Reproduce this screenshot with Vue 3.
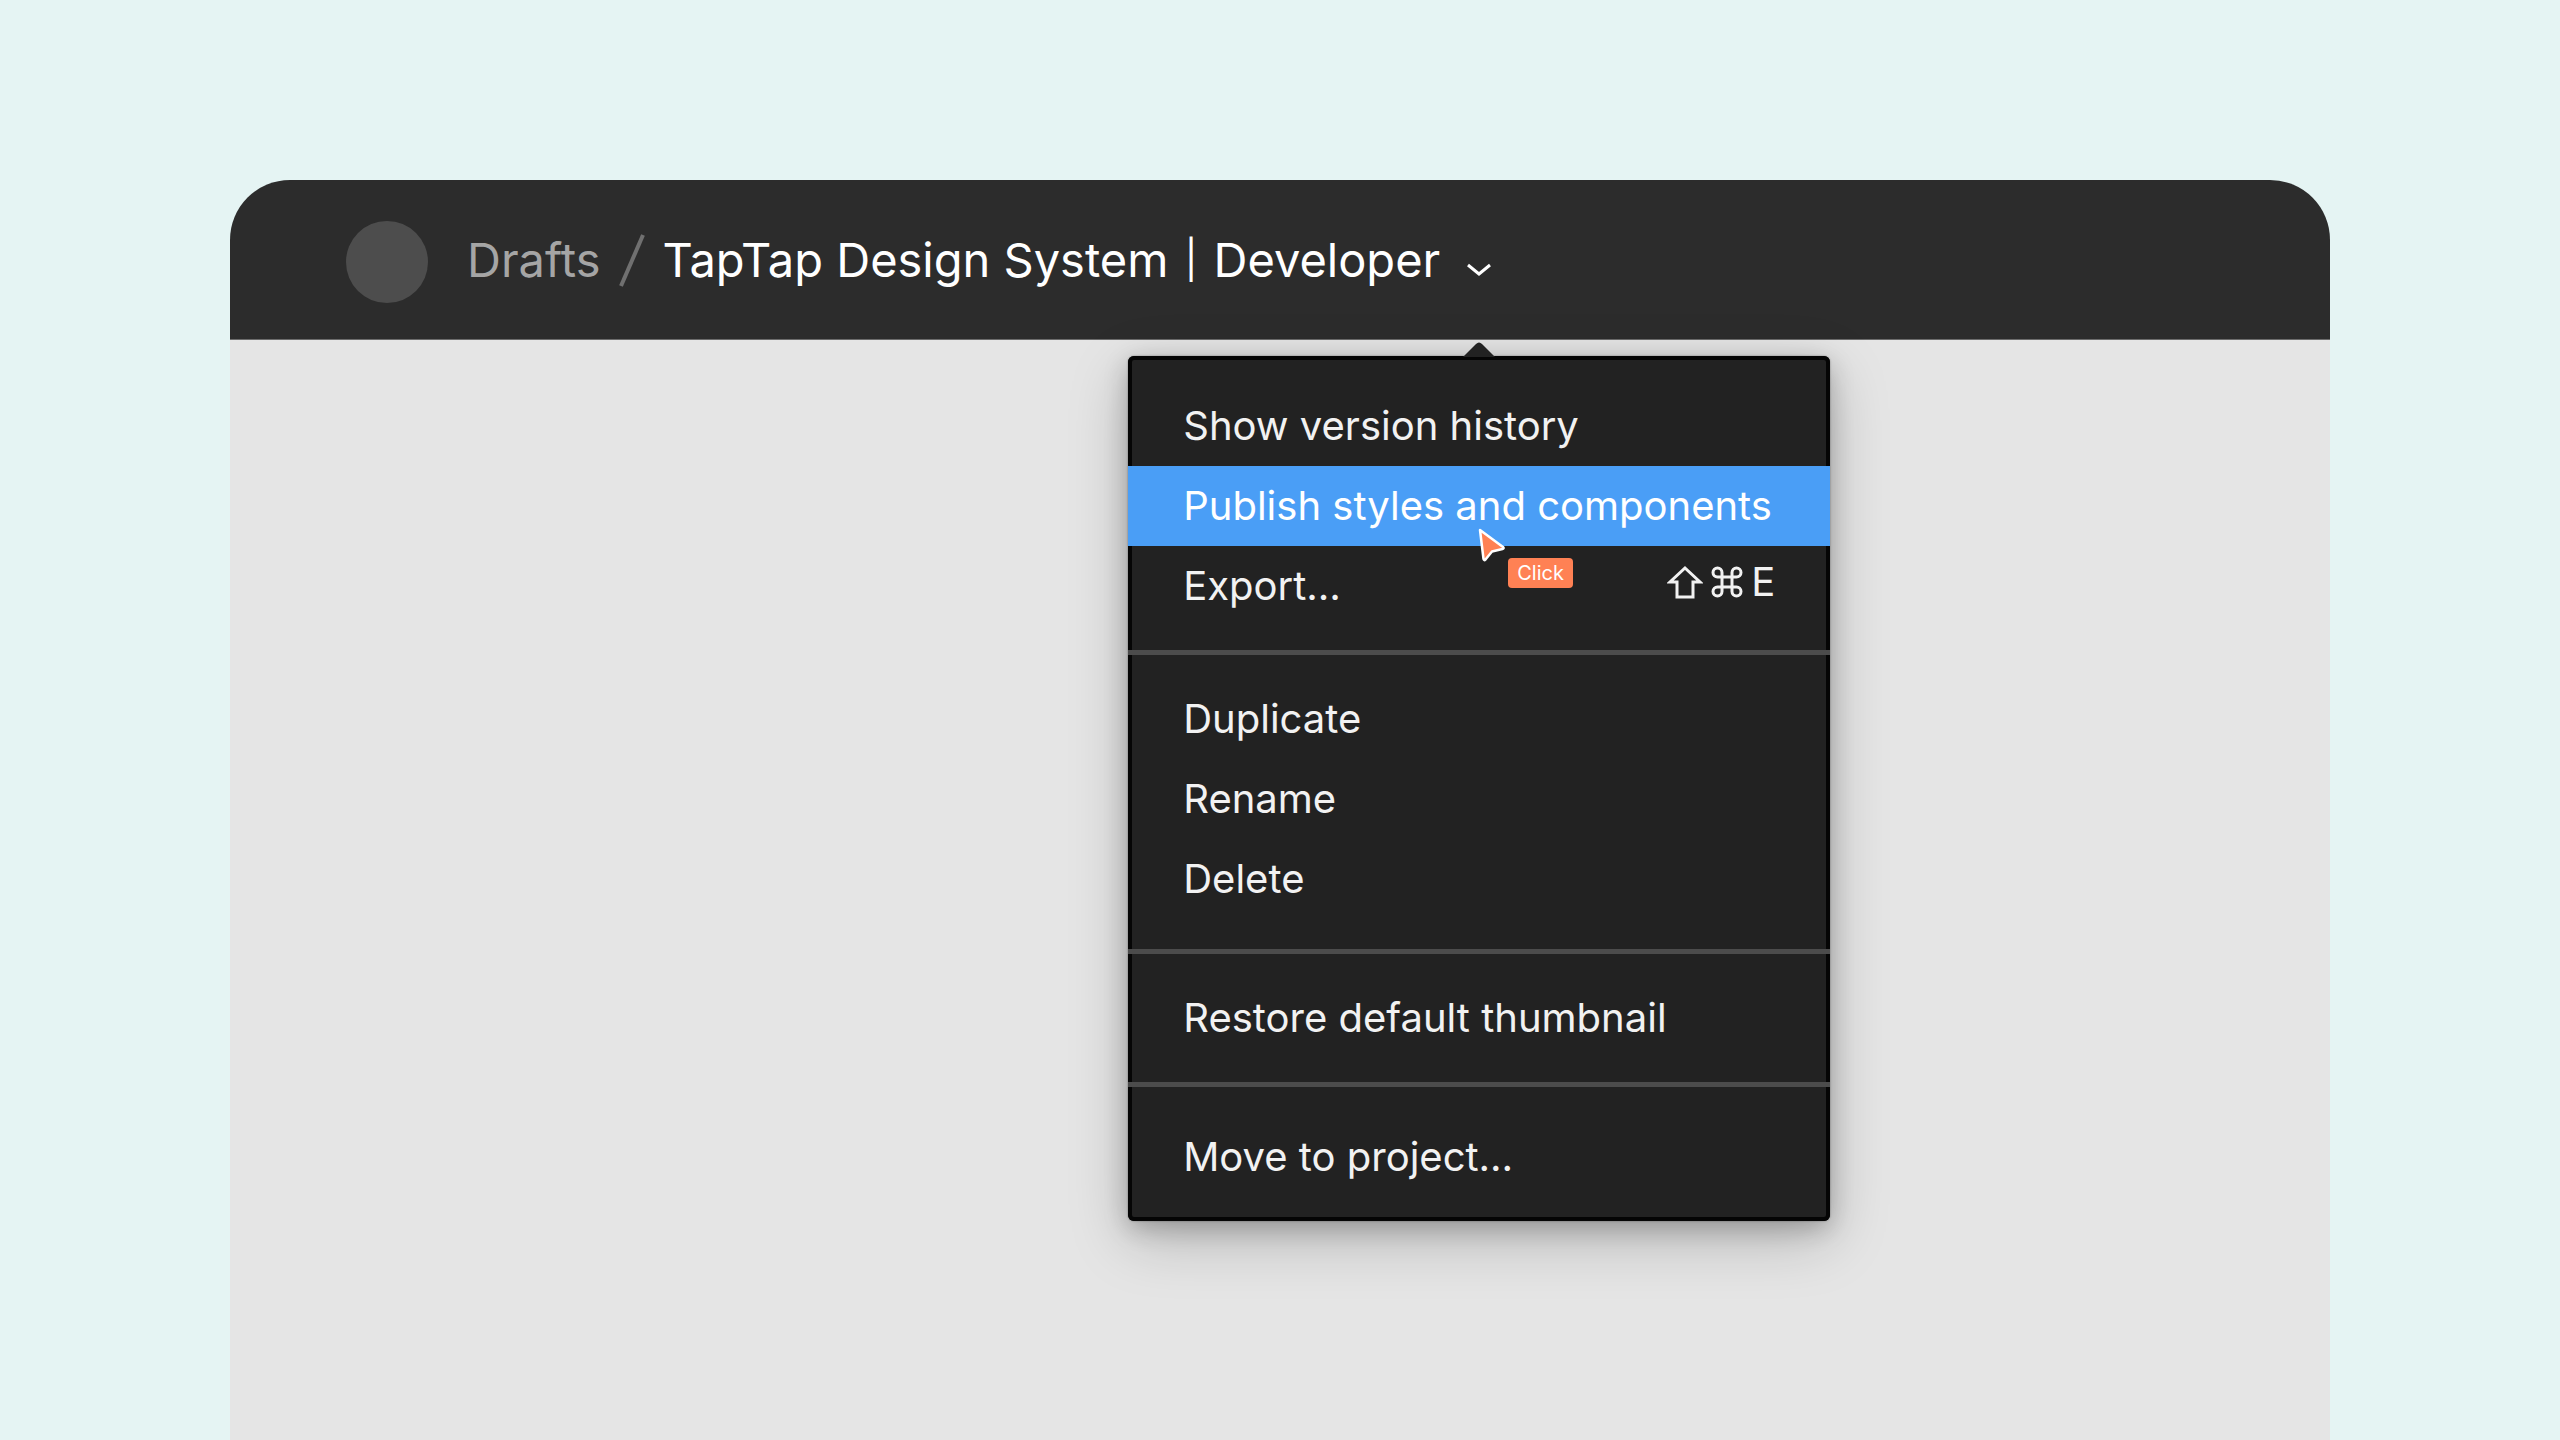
<script setup>
const sections = [
  {
    id: 'file',
    items: [
      { label: 'Show version history' },
      { label: 'Publish styles and components', active: true },
      { label: 'Export…', key: 'E' },
    ],
  },
  {
    id: 'edit',
    items: [{ label: 'Duplicate' }, { label: 'Rename' }, { label: 'Delete' }],
  },
  { id: 'thumbnail', items: [{ label: 'Restore default thumbnail' }] },
  { id: 'project', items: [{ label: 'Move to project…' }] },
]
</script>

<template>
  <main class="page">
    <div class="window">
      <header class="bar">
        <span class="avatar"></span>
        <nav class="crumbs">
          <a class="folder" href="#">Drafts</a>
          <svg class="slash" width="30" height="56" viewBox="0 0 30 56" aria-hidden="true">
            <path d="M4 54 26 3" stroke="#707070" stroke-width="4" />
          </svg>
          <h1 class="title">TapTap Design System <span class="pipe">|</span> Developer</h1>
        </nav>
        <div class="dropdown">
          <button class="toggle" type="button" aria-label="File menu" aria-expanded="true">
            <svg width="28" height="16" viewBox="0 0 28 16" aria-hidden="true">
              <path d="M3 3 14 12 25 3" fill="none" stroke="#fff" stroke-width="3" />
            </svg>
          </button>
          <div class="menu" role="menu">
            <svg class="pointer" width="32" height="15" viewBox="0 0 32 15" aria-hidden="true">
              <path d="M0 15 13 2Q16 -1 19 2L32 15Z" fill="#222" />
            </svg>
            <div v-for="s in sections" :key="s.id" class="section" :class="s.id" role="group">
              <button
                v-for="item in s.items"
                :key="item.label"
                class="item"
                :class="{ active: item.active }"
                type="button"
                role="menuitem"
              >
                <span>{{ item.label }}</span>
                <span v-if="item.key" class="shortcut">
                  <svg width="36" height="34" viewBox="0 0 36 34" role="img" aria-label="Shift">
                    <path d="M18 3 33 17H26V32H10V17H3Z" fill="none" stroke="#f2f2f2" stroke-width="3" />
                  </svg>
                  <svg width="34" height="34" viewBox="0 0 34 34" role="img" aria-label="Command">
                    <path
                      d="M12 12H22V22H12ZM12 12V7.500A4.500 4.500 0 1 0 7.500 12ZM12 12H7.500M22 12H26.500A4.500 4.500 0 1 0 22 7.500ZM22 12V7.500M22 22V26.500A4.500 4.500 0 1 0 26.500 22ZM22 22H26.500M12 22H7.500A4.500 4.500 0 1 0 12 26.500ZM12 22V26.500"
                      fill="none"
                      stroke="#f2f2f2"
                      stroke-width="3"
                    />
                  </svg>
                  <span>{{ item.key }}</span>
                </span>
              </button>
            </div>
            <div class="pointer-tag">
              <svg width="32" height="40" viewBox="0 0 32 40" aria-hidden="true">
                <path
                  d="M4 4 27 21Q28.500 22.500 26.500 23L16 25.500 9.500 33.500Q8 35 7.500 33Z"
                  fill="#ff8154"
                  stroke="#fff"
                  stroke-width="2.500"
                  stroke-linejoin="round"
                />
              </svg>
              <span class="tag">Click</span>
            </div>
          </div>
        </div>
      </header>
      <section class="canvas"></section>
    </div>
  </main>
</template>

<style>
body {
  background: #e5f4f3;
}
</style>

<style scoped>
.page {
  box-sizing: border-box;
  display: flex;
  min-height: 100vh;
  padding: 180px 230px 0;
  background: #e5f4f3;
  font-family: Inter, "Liberation Sans", sans-serif;
}
.window {
  flex: 1;
  display: flex;
  flex-direction: column;
}
.bar {
  display: flex;
  align-items: center;
  box-sizing: border-box;
  height: 160px;
  padding: 0 116px;
  border-bottom: 1px solid #6c6c6c;
  border-radius: 60px 60px 0 0;
  background: #2c2c2c;
}
.avatar {
  width: 82px;
  height: 82px;
  margin-top: 4px;
  border-radius: 50%;
  background: #4d4d4d;
}
.crumbs {
  display: flex;
  align-items: center;
  margin-left: 39px;
  font-size: 47px;
  line-height: 60px;
  white-space: nowrap;
}
.folder {
  color: #a5a5a5;
  text-decoration: none;
}
.slash {
  margin: 0 16px;
}
.title {
  margin: 0;
  color: #fff;
  font-size: 47px;
  font-weight: 400;
}
.pipe {
  margin: 0 3px;
  font-size: 38px;
  line-height: 1;
  vertical-align: 4px;
}
.dropdown {
  position: relative;
  margin-left: 25px;
}
.toggle {
  display: flex;
  margin: 0;
  padding: 21px 0 0;
  border: 0;
  background: none;
}
.menu {
  position: absolute;
  top: 115px;
  left: 50%;
  width: 702px;
  margin-left: -351px;
  border-radius: 6px;
  background: #222;
  box-shadow:
    inset 0 0 0 4px #050505,
    0 0 2px rgba(0, 0, 0, 0.4),
    0 7px 24px rgba(0, 0, 0, 0.22),
    0 18px 60px rgba(0, 0, 0, 0.22);
}
.pointer {
  position: absolute;
  top: -14px;
  left: 50%;
  margin-left: -16px;
}
.section {
  display: flex;
  flex-direction: column;
  padding: 24px 0;
}
.section + .section {
  border-top: 5px solid #4c4c4c;
}
.section.file,
.section.project {
  padding-top: 30px;
}
.section.edit {
  padding-bottom: 30px;
}
.item {
  display: flex;
  justify-content: space-between;
  align-items: center;
  height: 80px;
  margin: 0;
  padding: 0 55px;
  border: 0;
  background: none;
  color: #f2f2f2;
  font: inherit;
  font-size: 40px;
  line-height: 48px;
  white-space: nowrap;
}
.item.active {
  background: #4a9ef6;
  color: #fff;
}
.shortcut {
  display: flex;
  align-items: center;
  gap: 7px;
  padding-bottom: 8px;
}
.pointer-tag {
  position: absolute;
  top: 170px;
  left: 348px;
  display: flex;
  align-items: flex-start;
}
.tag {
  margin-top: 32px;
  padding: 0 9px;
  border-radius: 4px;
  background: #ff8154;
  color: #fff;
  font-size: 20px;
  line-height: 30px;
}
.canvas {
  flex: 1;
  background: #e5e5e5;
}
</style>
